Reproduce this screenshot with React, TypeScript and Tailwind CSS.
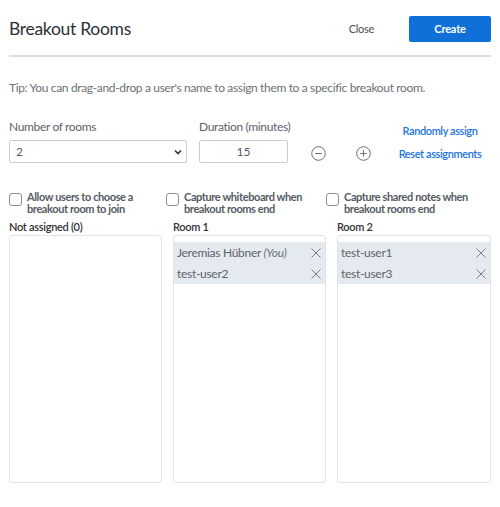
import React from "react";

const font = { fontFamily: "Lato, 'Noto Sans', sans-serif" };

function Check({ label }: { label: string }) {
  return (
    <div className="flex items-start gap-[5px]">
      <div className="mt-[2px] h-[13px] w-[13px] shrink-0 rounded-[3px] border border-[#8a8f96] bg-white" />
      <div className="whitespace-pre text-[11px] font-bold leading-[12px] tracking-[-0.4px] text-[#555b63]">{label}</div>
    </div>
  );
}

function XIcon() {
  return (
    <svg width="10" height="10" viewBox="0 0 10 10" className="shrink-0">
      <path d="M0.5 0.5 L9.5 9.5 M9.5 0.5 L0.5 9.5" stroke="#7a7f86" strokeWidth="1" fill="none" />
    </svg>
  );
}

function Item({ name, you }: { name: string; you?: boolean }) {
  return (
    <div className="flex h-[21px] items-center justify-between bg-[#e5eaf1] pl-[3px] pr-[4px]">
      <span className="text-[12px] tracking-[-0.3px] text-[#5d636b]">
        {name}
        {you && <i className="text-[#6d737b]"> (You)</i>}
      </span>
      <XIcon />
    </div>
  );
}

function Column({ title, items, w }: { title: string; items: { name: string; you?: boolean }[]; w: string }) {
  return (
    <div className={`flex flex-col ${w}`}>
      <div className="h-[17px] text-[11px] font-semibold leading-[17px] tracking-[-0.3px] text-[#333]">{title}</div>
      <div className="h-[248px] rounded-[3px] border border-[#dfe2e7] pt-[6px]">
        {items.map((it) => (
          <Item key={it.name} name={it.name} you={it.you} />
        ))}
      </div>
    </div>
  );
}

export default function App() {
  return (
    <div className="h-[507px] w-[500px] bg-white px-[9px] pt-[16px]" style={font}>
      <div className="flex h-[26px] items-center justify-between">
        <div className="text-[17.5px] leading-[26px] tracking-[-0.3px] text-[#2d3136]">Breakout Rooms</div>
        <div className="flex items-center">
          <span className="mr-[35px] text-[11px] tracking-[-0.3px] text-[#4a4f55]">Close</span>
          <div className="flex h-[26px] w-[82px] items-center justify-center rounded-[2px] bg-[#0f70d7] text-[11px] font-bold tracking-[-0.2px] text-white">
            Create
          </div>
        </div>
      </div>
      <div className="mt-[13px] h-[2px] bg-[#dde1e7]" />
      <div className="mt-[22px] text-[12px] leading-[18px] tracking-[-0.35px] text-[#6b7178]">
        Tip: You can drag-and-drop a user's name to assign them to a specific breakout room.
      </div>
      <div className="mt-[21px] flex">
        <div className="flex w-[178px] flex-col">
          <div className="text-[12px] leading-[18px] tracking-[-0.35px] text-[#5d636b]">Number of rooms</div>
          <div className="mt-[4px] flex h-[23px] items-center justify-between rounded-[2px] border border-[#c9ced5] pl-[6px] pr-[3px]">
            <span className="text-[12px] text-[#555b63]">2</span>
            <svg width="10" height="10" viewBox="0 0 10 10">
              <path d="M2 3.5 L5 6.5 L8 3.5" stroke="#333" strokeWidth="1.6" fill="none" />
            </svg>
          </div>
        </div>
        <div className="ml-[12px] flex w-[89px] flex-col">
          <div className="whitespace-nowrap text-[12px] leading-[18px] tracking-[-0.35px] text-[#5d636b]">Duration (minutes)</div>
          <div className="mt-[4px] flex h-[23px] items-center justify-center rounded-[2px] border border-[#c9ced5]">
            <span className="text-[12px] text-[#555b63]">15</span>
          </div>
        </div>
        <div className="ml-[23px] mt-[25px] flex items-center gap-[30px]">
          <svg width="15" height="15" viewBox="0 0 15 15">
            <circle cx="7.5" cy="7.5" r="6.8" stroke="#6b7178" strokeWidth="1" fill="none" />
            <path d="M4.2 7.5 H10.8" stroke="#6b7178" strokeWidth="1" />
          </svg>
          <svg width="15" height="15" viewBox="0 0 15 15">
            <circle cx="7.5" cy="7.5" r="6.8" stroke="#6b7178" strokeWidth="1" fill="none" />
            <path d="M4.2 7.5 H10.8 M7.5 4.2 V10.8" stroke="#6b7178" strokeWidth="1" />
          </svg>
        </div>
        <div className="ml-auto mr-[9px] flex w-[84px] flex-col items-center pt-[4px]">
          <div className="whitespace-nowrap text-[11px] font-semibold leading-[18px] tracking-[-0.4px] text-[#1a73e0]">Randomly assign</div>
          <div className="mt-[5px] whitespace-nowrap text-[11px] font-semibold leading-[18px] tracking-[-0.4px] text-[#1a73e0]">Reset assignments</div>
        </div>
      </div>
      <div className="mt-[28px] flex">
        <div className="w-[157px]">
          <Check label={"Allow users to choose a\nbreakout room to join"} />
        </div>
        <div className="w-[160px]">
          <Check label={"Capture whiteboard when\nbreakout rooms end"} />
        </div>
        <div className="flex-1">
          <Check label={"Capture shared notes when\nbreakout rooms end"} />
        </div>
      </div>
      <div className="mt-[3px] flex justify-between">
        <Column w="w-[153px]" title="Not assigned (0)" items={[]} />
        <Column
          w="w-[153px]"
          title="Room 1"
          items={[{ name: "Jeremias Hübner", you: true }, { name: "test-user2" }]}
        />
        <Column w="w-[154px]" title="Room 2" items={[{ name: "test-user1" }, { name: "test-user3" }]} />
      </div>
    </div>
  );
}
